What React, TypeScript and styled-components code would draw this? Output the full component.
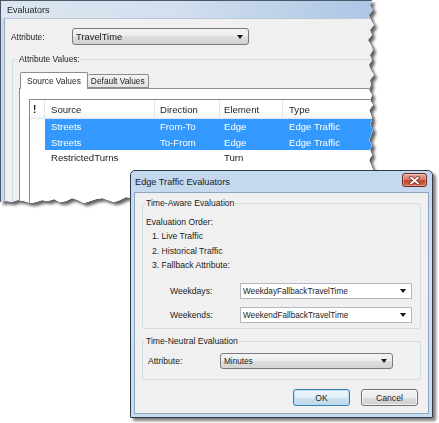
import React from "react";
import styled, { createGlobalStyle } from "styled-components";

const GlobalStyle = createGlobalStyle`
  html, body { margin: 0; padding: 0; background: #ffffff; }
  body { font-family: "Liberation Sans", Arial, sans-serif; color: #1c1c1c; }
  * { box-sizing: border-box; }
`;

/* ---------- torn-paper outline of the background window ---------- */
const RIGHT_X = [
  372, 370, 373, 369, 371, 374, 370, 372, 368, 371, 373, 370, 372, 369, 371,
  374, 370, 371, 369, 372, 370, 373, 369, 371, 372, 370, 373, 371, 369, 372,
  370, 372, 369, 371, 373, 370, 372, 370, 371, 369, 372, 370,
];
const BOTTOM_Y = [
  201, 199, 202, 200, 198, 201, 203, 200, 199, 201, 197, 200, 202, 199, 201,
  198, 200, 203, 201, 199, 197, 200, 202, 199, 198, 195, 199, 201, 198, 196,
  199, 202, 200, 197, 201, 199, 196, 200, 202, 201, 198, 197, 200, 202, 200,
  198, 199, 201, 203, 200, 198, 201, 202, 199, 201, 200, 202, 203, 201, 200,
  202, 201, 202,
];
const TORN = (() => {
  const pts: string[] = ["0px 0px"];
  RIGHT_X.forEach((x, i) => pts.push(`${x}px ${i * 5}px`));
  const n = BOTTOM_Y.length;
  BOTTOM_Y.forEach((y, i) => {
    const x = Math.max(0, 372 - Math.round((i * 372) / (n - 1)));
    pts.push(`${x}px ${y}px`);
  });
  return pts.join(", ");
})();

/* ---------- page ---------- */
const Canvas = styled.div`
  position: relative;
  width: 439px;
  height: 423px;
  overflow: hidden;
  background: #ffffff;
`;

const TornShadow = styled.div`
  width: 392px;
  filter: drop-shadow(3px 3px 1.5px rgba(0, 0, 0, 0.62));
`;

const BackWindow = styled.div`
  width: 392px;
  height: 212px;
  display: flex;
  flex-direction: column;
  background: #cbdbed;
  border-top: 1px solid #4a596a;
  border-left: 1px solid #4a596a;
  clip-path: polygon(${TORN});
  overflow: hidden;
`;

const BackTitle = styled.div`
  height: 17px;
  flex: none;
  display: flex;
  align-items: center;
  padding-left: 6px;
  font-size: 9px;
  color: #1e1e1e;
  background: linear-gradient(to right, #dde6f0 0%, #d2dfee 45%, #a9c4e4 100%);
`;

const BackClient = styled.div`
  flex: 1;
  margin-left: 3px;
  background: #f0f0f0;
  border-left: 1px solid #9aabbf;
  border-top: 1px solid #b9c8d9;
`;

const FieldRow = styled.div<{ $mt: number; $ml: number }>`
  display: flex;
  align-items: center;
  margin-top: ${(p) => p.$mt}px;
  padding-left: ${(p) => p.$ml}px;
`;

const Label = styled.span<{ $w: number; $size?: number }>`
  width: ${(p) => p.$w}px;
  flex: none;
  font-size: ${(p) => p.$size ?? 8.4}px;
  color: #1c1c1c;
  white-space: nowrap;
`;

const ThemedCombo = styled.div<{ $w: number; $h: number; $size: number }>`
  width: ${(p) => p.$w}px;
  height: ${(p) => p.$h}px;
  flex: none;
  display: flex;
  align-items: center;
  justify-content: space-between;
  padding: 0 5px 0 3px;
  border: 1px solid #7a7a7a;
  border-radius: 3px;
  font-size: ${(p) => p.$size}px;
  color: #1c1c1c;
  background: linear-gradient(to bottom, #f4f4f4 0%, #ececec 50%, #dedede 50%, #d3d3d3 100%);
`;

const PlainCombo = styled.div<{ $w: number }>`
  width: ${(p) => p.$w}px;
  height: 16px;
  flex: none;
  display: flex;
  align-items: center;
  justify-content: space-between;
  padding: 0 5px 0 2px;
  border: 1px solid #b3b8c2;
  background: #ffffff;
  font-size: 8.2px;
  color: #1c1c1c;
`;

const ComboArrow = styled.span`
  width: 0;
  height: 0;
  border-left: 3px solid transparent;
  border-right: 3px solid transparent;
  border-top: 4px solid #1a1a1a;
`;

const GroupBox = styled.fieldset<{ $w: number; $mt: number; $ml: number; $pad: string }>`
  width: ${(p) => p.$w}px;
  margin: ${(p) => p.$mt}px 0 0 ${(p) => p.$ml}px;
  padding: ${(p) => p.$pad};
  border: 1px solid #d2dbe2;
  border-radius: 3px;
  min-width: 0;
`;

const Legend = styled.legend<{ $size?: number }>`
  padding: 0 1px;
  margin-left: -1px;
  height: 12px;
  line-height: 12px;
  font-size: ${(p) => p.$size ?? 8.4}px;
  color: #1c1c1c;
  white-space: nowrap;
`;

/* ---------- tabs + list view ---------- */
const TabStrip = styled.div`
  display: flex;
  align-items: flex-end;
  height: 16px;
  margin-left: 1px;
`;

const Tab = styled.div<{ $active?: boolean }>`
  position: relative;
  z-index: ${(p) => (p.$active ? 1 : 0)};
  height: ${(p) => (p.$active ? 17 : 14)}px;
  margin-bottom: ${(p) => (p.$active ? -1 : 0)}px;
  padding: ${(p) => (p.$active ? "0 6px" : "0 3px")};
  display: flex;
  align-items: center;
  font-size: 8.4px;
  color: #1c1c1c;
  border: 1px solid #898c95;
  border-bottom: ${(p) => (p.$active ? "none" : "1px solid #898c95")};
  border-left: ${(p) => (p.$active ? "1px solid #898c95" : "none")};
  border-radius: 2px 2px 0 0;
  background: ${(p) =>
    p.$active ? "#ffffff" : "linear-gradient(to bottom, #f3f3f3, #e3e3e3)"};
`;

const TabPanel = styled.div`
  height: 150px;
  width: 400px;
  padding: 10px 0 0 9px;
  background: #ffffff;
  border: 1px solid #898c95;
`;

const ListView = styled.div`
  width: 400px;
  height: 120px;
  border: 1px solid #828790;
  background: #ffffff;
`;

const COLS = "15px 110px 65px 63px 1fr";

const HeaderRow = styled.div`
  display: grid;
  grid-template-columns: ${COLS};
  height: 19px;
  border-bottom: 1px solid #e2e4e8;
  background: linear-gradient(to bottom, #ffffff 0%, #ffffff 60%, #f6f7f8 100%);
`;

const HeaderCell = styled.div<{ $bold?: boolean; $pl: number }>`
  display: flex;
  align-items: center;
  padding-left: ${(p) => p.$pl}px;
  border-right: 1px solid #e3e5e8;
  font-size: ${(p) => (p.$bold ? 10 : 9.6)}px;
  font-weight: ${(p) => (p.$bold ? 700 : 400)};
  color: #1e1e1e;
`;

const DataRow = styled.div`
  display: grid;
  grid-template-columns: ${COLS};
  height: 15.5px;
`;

const DataCell = styled.div<{ $sel?: boolean; $pl: number }>`
  display: flex;
  align-items: center;
  padding-left: ${(p) => p.$pl}px;
  font-size: 9.6px;
  white-space: nowrap;
  color: ${(p) => (p.$sel ? "#ffffff" : "#1c1c1c")};
  background: ${(p) => (p.$sel ? "#3399ff" : "transparent")};
`;

/* ---------- dialog ---------- */
const Dialog = styled.div`
  position: absolute;
  left: 130px;
  top: 170px;
  width: 303px;
  height: 248px;
  display: flex;
  flex-direction: column;
  padding: 0 3px 3px 3px;
  border: 1px solid #2e3a48;
  border-radius: 5px 5px 1px 1px;
  background: linear-gradient(to bottom, #c3d7ee 0%, #d3e2f3 40%, #c7dbf0 100%);
  box-shadow: 3px 3px 3px rgba(0, 0, 0, 0.5);
`;

const DialogTitle = styled.div`
  height: 21px;
  flex: none;
  display: flex;
  align-items: flex-start;
  justify-content: space-between;
  padding: 2px 2px 0 1px;
`;

const TitleText = styled.span`
  margin-top: 4px;
  font-size: 9.2px;
  color: #1a1a1a;
`;

const CloseButton = styled.div`
  width: 25px;
  height: 14px;
  display: flex;
  align-items: center;
  justify-content: center;
  border: 1px solid #6d2a20;
  border-radius: 3px;
  background: linear-gradient(to bottom, #e8a99c 0%, #d77a69 45%, #c2432f 55%, #cf6a4f 100%);
  box-shadow: inset 0 0 0 1px rgba(255, 255, 255, 0.35);
`;

const DialogClient = styled.div`
  flex: 1;
  display: flex;
  flex-direction: column;
  padding: 4px 8px 0 7px;
  background: #f0f0f0;
  border: 1px solid #8fa5bf;
`;

const TextLine = styled.div<{ $indent: number }>`
  height: 14.5px;
  line-height: 14.5px;
  padding-left: ${(p) => p.$indent}px;
  font-size: 8.6px;
  color: #1c1c1c;
  white-space: nowrap;
`;

const ButtonRow = styled.div`
  display: flex;
  justify-content: flex-end;
  gap: 11px;
  margin-top: 9px;
  margin-right: 2px;
`;

const Button = styled.div<{ $default?: boolean }>`
  width: 57px;
  height: 17px;
  display: flex;
  align-items: center;
  justify-content: center;
  font-size: 8.6px;
  color: #1c1c1c;
  border-radius: 3px;
  border: 1px solid ${(p) => (p.$default ? "#3c7fb1" : "#707070")};
  background: ${(p) =>
    p.$default
      ? "linear-gradient(to bottom, #eef6fc 0%, #e0edf7 50%, #cde1f0 50%, #c0d8ec 100%)"
      : "linear-gradient(to bottom, #f2f2f2 0%, #ebebeb 50%, #dddddd 50%, #cfcfcf 100%)"};
  box-shadow: ${(p) =>
    p.$default ? "inset 0 0 0 1px #b4def6" : "inset 0 0 0 1px rgba(255,255,255,0.7)"};
`;

const CloseGlyph = () => (
  <svg width="11" height="9" viewBox="0 0 11 9">
    <path d="M2 1.5 L9 7.5 M9 1.5 L2 7.5" stroke="#6a2419" strokeWidth="3.4" strokeLinecap="round" />
    <path d="M2 1.5 L9 7.5 M9 1.5 L2 7.5" stroke="#ffffff" strokeWidth="1.9" strokeLinecap="round" />
  </svg>
);

type Row = { src: string; dir: string; el: string; type: string; sel: boolean };
const ROWS: Row[] = [
  { src: "Streets", dir: "From-To", el: "Edge", type: "Edge Traffic", sel: true },
  { src: "Streets", dir: "To-From", el: "Edge", type: "Edge Traffic", sel: true },
  { src: "RestrictedTurns", dir: "", el: "Turn", type: "", sel: false },
];

export default function App() {
  return (
    <Canvas>
      <GlobalStyle />
      <TornShadow>
        <BackWindow>
          <BackTitle>Evaluators</BackTitle>
          <BackClient>
            <FieldRow $mt={9} $ml={6}>
              <Label $w={61}>Attribute:</Label>
              <ThemedCombo $w={177} $h={17} $size={9.4}>
                TravelTime
                <ComboArrow />
              </ThemedCombo>
            </FieldRow>
            <GroupBox $w={420} $mt={8} $ml={7} $pad="7px 6px 0 6px">
              <Legend>Attribute Values:</Legend>
              <TabStrip>
                <Tab $active>Source Values</Tab>
                <Tab>Default Values</Tab>
              </TabStrip>
              <TabPanel>
                <ListView>
                  <HeaderRow>
                    <HeaderCell $bold $pl={3}>!</HeaderCell>
                    <HeaderCell $pl={6}>Source</HeaderCell>
                    <HeaderCell $pl={5}>Direction</HeaderCell>
                    <HeaderCell $pl={4}>Element</HeaderCell>
                    <HeaderCell $pl={6}>Type</HeaderCell>
                  </HeaderRow>
                  {ROWS.map((r, i) => (
                    <DataRow key={i}>
                      <DataCell $pl={0} />
                      <DataCell $sel={r.sel} $pl={6}>{r.src}</DataCell>
                      <DataCell $sel={r.sel} $pl={5}>{r.dir}</DataCell>
                      <DataCell $sel={r.sel} $pl={4}>{r.el}</DataCell>
                      <DataCell $sel={r.sel} $pl={6}>{r.type}</DataCell>
                    </DataRow>
                  ))}
                </ListView>
              </TabPanel>
            </GroupBox>
          </BackClient>
        </BackWindow>
      </TornShadow>

      <Dialog>
        <DialogTitle>
          <TitleText>Edge Traffic Evaluators</TitleText>
          <CloseButton>
            <CloseGlyph />
          </CloseButton>
        </DialogTitle>
        <DialogClient>
          <GroupBox $w={279} $mt={0} $ml={0} $pad="5.5px 3px 5px 3px">
            <Legend $size={8.6}>Time-Aware Evaluation</Legend>
            <TextLine $indent={0}>Evaluation Order:</TextLine>
            <TextLine $indent={6}>1. Live Traffic</TextLine>
            <TextLine $indent={6}>2. Historical Traffic</TextLine>
            <TextLine $indent={6}>3. Fallback Attribute:</TextLine>
            <FieldRow $mt={10.5} $ml={24}>
              <Label $w={70} $size={8.6}>Weekdays:</Label>
              <PlainCombo $w={172}>
                WeekdayFallbackTravelTime
                <ComboArrow />
              </PlainCombo>
            </FieldRow>
            <FieldRow $mt={8} $ml={24}>
              <Label $w={70} $size={8.6}>Weekends:</Label>
              <PlainCombo $w={172}>
                WeekendFallbackTravelTime
                <ComboArrow />
              </PlainCombo>
            </FieldRow>
          </GroupBox>
          <GroupBox $w={279} $mt={6} $ml={0} $pad="6px 3px 10px 3px">
            <Legend $size={8.6}>Time-Neutral Evaluation</Legend>
            <FieldRow $mt={0} $ml={2}>
              <Label $w={72} $size={8.6}>Attribute:</Label>
              <ThemedCombo $w={173} $h={16} $size={8.2}>
                Minutes
                <ComboArrow />
              </ThemedCombo>
            </FieldRow>
          </GroupBox>
          <ButtonRow>
            <Button $default>OK</Button>
            <Button>Cancel</Button>
          </ButtonRow>
        </DialogClient>
      </Dialog>
    </Canvas>
  );
}
